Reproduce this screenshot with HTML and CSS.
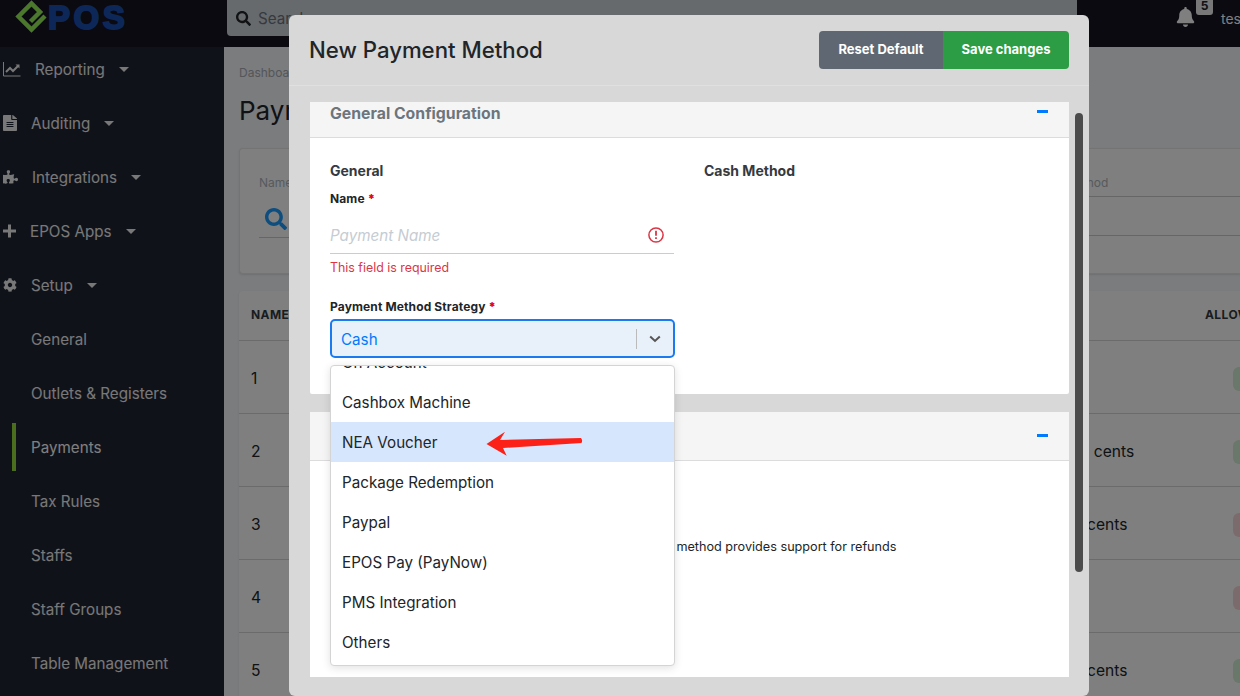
FILE: index.html
```html
<!DOCTYPE html>
<html lang="en">
<head>
<meta charset="utf-8">
<title>New Payment Method</title>
<link rel="stylesheet" href="styles.css">
</head>
<body>
<div class="page">
  <header class="topbar">
    <div class="logo">
      <svg class="logo-mark" viewBox="0 0 33 34"><path d="M30 16 16.500 29.500 3.500 16.500 16.500 3.500 25 12 15.500 21.500" fill="none" stroke="#96f05a" stroke-width="4.500"/></svg>
      <span class="logo-text">POS</span>
    </div>
    <div class="search">
      <svg class="search-icon" viewBox="0 0 512 512"><path d="M505 442.7L405.3 343c-4.5-4.5-10.6-7-17-7H372c27.6-35.3 44-79.7 44-128C416 93.1 322.9 0 208 0S0 93.1 0 208s93.1 208 208 208c48.3 0 92.7-16.4 128-44v16.3c0 6.4 2.5 12.5 7 17l99.7 99.7c9.4 9.4 24.6 9.4 33.9 0l28.3-28.3c9.4-9.4 9.4-24.6.1-34zM208 336c-70.7 0-128-57.2-128-128 0-70.7 57.2-128 128-128 70.7 0 128 57.2 128 128 0 70.7-57.2 128-128 128z"/></svg>
      <span>Search</span>
    </div>
    <div class="user">
      <div class="bell-wrap">
        <svg class="bell" viewBox="0 0 448 512"><path d="M224 512c35.32 0 63.97-28.65 63.97-64H160.03c0 35.35 28.65 64 63.97 64zm215.39-149.71c-19.32-20.76-55.47-51.99-55.47-154.29 0-77.7-54.48-139.9-127.94-155.16V32c0-17.67-14.32-32-31.98-32s-31.98 14.33-31.98 32v20.84C118.56 68.1 64.08 130.3 64.08 208c0 102.3-36.15 133.53-55.47 154.29-6 6.45-8.66 14.16-8.61 21.71.11 16.4 12.98 32 32.1 32h383.8c19.12 0 32-15.6 32.1-32 .05-7.55-2.61-15.27-8.61-21.71z"/></svg>
        <span class="badge">5</span>
      </div>
      <span class="username">test</span>
    </div>
  </header>

  <div class="shell">
    <nav class="sidebar">
      <ul class="nav">
        <li class="nav-item"><svg class="nav-icon w18" viewBox="0 0 18 16"><path d="M.5 1v14h17" fill="none" stroke-width="1"/><path d="M3 11 7 7l3 3 5-5" fill="none" stroke-width="2"/><path d="M12.5 3.500h4v4z" stroke="none"/></svg><span>Reporting</span><i class="caret"></i></li>
        <li class="nav-item"><svg class="nav-icon w14" viewBox="0 0 384 512" preserveAspectRatio="none"><path d="M224 136V0H24C10.7 0 0 10.7 0 24v464c0 13.3 10.7 24 24 24h336c13.3 0 24-10.7 24-24V160H248c-13.2 0-24-10.800-24-24zm64 236c0 6.600-5.400 12-12 12H108c-6.600 0-12-5.400-12-12v-8c0-6.600 5.400-12 12-12h168c6.600 0 12 5.400 12 12v8zm0-64c0 6.600-5.400 12-12 12H108c-6.600 0-12-5.400-12-12v-8c0-6.600 5.400-12 12-12h168c6.600 0 12 5.400 12 12v8zm0-72v8c0 6.600-5.400 12-12 12H108c-6.600 0-12-5.400-12-12v-8c0-6.600 5.400-12 12-12h168c6.600 0 12 5.400 12 12zm96-114.100v6.100H256V0h6.100c6.400 0 12.500 2.500 17 7l97.900 98c4.500 4.500 7 10.600 7 16.900z"/></svg><span>Auditing</span><i class="caret"></i></li>
        <li class="nav-item"><svg class="nav-icon w15" viewBox="0 0 576 512"><path d="M519.442 288.651c-41.519 0-59.5 31.593-82.058 31.593C377.409 320.244 432 144 432 144s-196.288 80-196.288-3.297c0-35.827 36.288-46.25 36.288-85.985C272 19.216 243.885 0 210.539 0c-34.654 0-66.366 18.891-66.366 56.346 0 41.364 31.711 59.277 31.711 81.75C175.885 207.719 0 166.758 0 166.758v333.237s178.635 41.047 178.635-28.662c0-22.473-40-40.107-40-81.471 0-37.456 29.25-56.346 63.577-56.346 33.673 0 61.788 19.216 61.788 54.717 0 39.735-36.288 50.158-36.288 85.985 0 60.803 129.675 25.73 181.23 25.73 0 0-34.725-120.101 25.827-120.101 35.962 0 46.423 36.152 86.308 36.152C556.712 416 576 387.99 576 354.443c0-34.199-18.962-65.792-56.558-65.792z"/></svg><span>Integrations</span><i class="caret"></i></li>
        <li class="nav-item"><svg class="nav-icon w13" viewBox="0 0 13 13"><path d="M5 0h3v5h5v3H8v5H5V8H0V5h5z"/></svg><span>EPOS Apps</span><i class="caret"></i></li>
        <li class="nav-item"><svg class="nav-icon w14" viewBox="0 0 512 512"><path d="M487.4 315.7l-42.6-24.6c4.3-23.2 4.3-47 0-70.2l42.6-24.6c4.9-2.8 7.1-8.6 5.5-14-11.1-35.6-30-67.8-54.7-94.6-3.8-4.1-10-5.1-14.8-2.3L380.8 110c-17.9-15.4-38.5-27.3-60.8-35.1V25.8c0-5.6-3.9-10.5-9.4-11.7-36.7-8.2-74.3-7.8-109.2 0-5.5 1.2-9.4 6.1-9.4 11.7V75c-22.2 7.9-42.8 19.8-60.8 35.1L88.7 85.5c-4.9-2.8-11-1.9-14.8 2.3-24.7 26.7-43.6 58.9-54.7 94.6-1.7 5.4.6 11.2 5.5 14L67.3 221c-4.3 23.2-4.3 47 0 70.2l-42.6 24.6c-4.9 2.8-7.1 8.6-5.5 14 11.1 35.6 30 67.8 54.7 94.6 3.8 4.1 10 5.1 14.8 2.3l42.6-24.6c17.9 15.4 38.5 27.3 60.8 35.1v49.2c0 5.6 3.9 10.5 9.4 11.7 36.7 8.2 74.3 7.8 109.2 0 5.5-1.2 9.4-6.1 9.4-11.7v-49.2c22.2-7.9 42.8-19.8 60.8-35.1l42.6 24.6c4.9 2.8 11 1.9 14.8-2.3 24.7-26.7 43.6-58.9 54.7-94.6 1.500-5.500-.7-11.300-5.600-14.100zM256 336c-44.100 0-80-35.900-80-80s35.900-80 80-80 80 35.900 80 80-35.900 80-80 80z"/></svg><span>Setup</span><i class="caret"></i></li>
        <li class="nav-item sub">General</li>
        <li class="nav-item sub">Outlets &amp; Registers</li>
        <li class="nav-item sub active">Payments</li>
        <li class="nav-item sub">Tax Rules</li>
        <li class="nav-item sub">Staffs</li>
        <li class="nav-item sub">Staff Groups</li>
        <li class="nav-item sub">Table Management</li>
      </ul>
    </nav>

    <main class="main">
      <div class="crumb">Dashboard</div>
      <h1 class="page-title">Payments</h1>
      <section class="filter">
        <div class="filter-col">
          <div class="filter-label">Name</div>
          <div class="filter-input">
            <svg class="filter-icon" viewBox="0 0 512 512"><path d="M505 442.7L405.3 343c-4.5-4.5-10.6-7-17-7H372c27.6-35.3 44-79.7 44-128C416 93.1 322.9 0 208 0S0 93.1 0 208s93.1 208 208 208c48.3 0 92.7-16.4 128-44v16.3c0 6.4 2.5 12.5 7 17l99.7 99.7c9.4 9.4 24.6 9.4 33.9 0l28.3-28.3c9.4-9.4 9.4-24.6.1-34zM208 336c-70.7 0-128-57.2-128-128 0-70.7 57.2-128 128-128 70.7 0 128 57.2 128 128 0 70.7-57.200 128-128 128z"/></svg>
          </div>
        </div>
        <div class="filter-col right">
          <div class="filter-label bordered">Payment Method</div>
          <div class="filter-input"></div>
        </div>
      </section>
      <section class="table">
        <div class="row head"><span>NAME</span><span></span><span>ALLOW</span></div>
        <div class="row"><span>1</span><span></span><span><i class="pill ok"></i></span></div>
        <div class="row"><span>2</span><span>Round to 10 cents</span><span><i class="pill ok"></i></span></div>
        <div class="row"><span>3</span><span>Round to 5 cents</span><span><i class="pill no"></i></span></div>
        <div class="row"><span>4</span><span></span><span><i class="pill no"></i></span></div>
        <div class="row"><span>5</span><span>Round to 5 cents</span><span><i class="pill ok"></i></span></div>
      </section>
    </main>
  </div>

  <div class="backdrop"></div>

  <div class="modal">
    <div class="modal-head">
      <h2 class="modal-title">New Payment Method</h2>
      <div class="btn-group">
        <button class="btn reset">Reset Default</button>
        <button class="btn save">Save changes</button>
      </div>
    </div>
    <div class="modal-body">
      <div class="cards">
        <section class="card first">
          <div class="card-head one"><span>General Configuration</span><i class="minus"></i></div>
          <div class="card-body columns">
            <div class="col">
              <h3 class="col-title">General</h3>
              <label class="label">Name <b>*</b></label>
              <div class="input">
                <span class="placeholder">Payment Name</span>
                <svg class="err-icon" viewBox="0 0 16 16"><circle cx="8" cy="8" r="7.100" fill="none" stroke="#dc3545" stroke-width="1.500"/><path d="M8 3.800v5M8 10.300v1.800" fill="none" stroke="#dc3545" stroke-width="1.800"/></svg>
              </div>
              <div class="error">This field is required</div>
              <label class="label second">Payment Method Strategy <b>*</b></label>
              <div class="select-wrap">
                <div class="select">
                  <span class="select-value">Cash</span>
                  <span class="select-sep"></span>
                  <svg class="chevron" viewBox="0 0 12 8"><path d="M1.200 1.500 6 6l4.800-4.500" fill="none" stroke="#555" stroke-width="2"/></svg>
                </div>
                <ul class="menu">
                  <li class="opt">On Account</li>
                  <li class="opt">Cashbox Machine</li>
                  <li class="opt hi">NEA Voucher</li>
                  <li class="opt">Package Redemption</li>
                  <li class="opt">Paypal</li>
                  <li class="opt">EPOS Pay (PayNow)</li>
                  <li class="opt">PMS Integration</li>
                  <li class="opt">Others</li>
                </ul>
              </div>
            </div>
            <div class="col">
              <h3 class="col-title">Cash Method</h3>
            </div>
          </div>
        </section>
        <section class="card">
          <div class="card-head two"><span></span><i class="minus"></i></div>
          <div class="card-body">
            <p class="note">This payment method provides support for refunds</p>
          </div>
        </section>
      </div>
      <div class="gutter"><div class="thumb"></div></div>
    </div>
  </div>

  <svg class="arrow" viewBox="0 0 98 28"><path d="M.5 14 19 1.700 14 10 95 8Q97 10.500 95.500 13L17 18 20.700 25.700z" fill="#fb2119"/></svg>
</div>
</body>
</html>
```

FILE: styles.css
```css
* { box-sizing: border-box; }
html, body { margin: 0; padding: 0; }
body { font-family: Inter, "Liberation Sans", sans-serif; color: #212529; }
ul { list-style: none; margin: 0; padding: 0; }
h1, h2, h3, p { margin: 0; }

.page { position: relative; width: 1240px; height: 696px; overflow: hidden; display: flex; flex-direction: column; background: #f6f8fb; }

/* top bar */
.topbar { flex: 0 0 47px; background: #141420; display: flex; align-items: flex-start; position: relative; z-index: 1; }
.logo { width: 227px; display: flex; align-items: flex-start; padding: 0 0 0 15px; }
.logo-mark { width: 33px; height: 34px; }
.logo-text { font-family: "Liberation Sans", sans-serif; font-weight: 700; font-size: 33px; line-height: 36px; letter-spacing: 3.5px; color: #1a50b0; -webkit-text-stroke: 2px #1a50b0; margin-left: 0; }
.search { width: 850px; height: 36px; background: #cfd4da; border-radius: 0 0 4px 4px; display: flex; align-items: center; gap: 7px; padding-left: 9px; font-size: 15.2px; color: #6c757d; }
.search-icon { width: 15px; height: 15px; fill: #212529; }
.user { margin-left: auto; display: flex; align-items: flex-start; overflow: hidden; width: 64px; }
.bell-wrap { position: relative; width: 45px; height: 30px; flex: none; }
.bell { position: absolute; left: 0; top: 7px; width: 19px; height: 20px; fill: #fff; }
.badge { position: absolute; left: 20px; top: -3px; width: 17px; height: 18px; border-radius: 3px; background: #f0f0f0; color: #212529; font-size: 12px; font-weight: 700; text-align: center; line-height: 18px; }
.username { font-size: 14px; color: #fff; line-height: 38px; }

/* shell */
.shell { flex: 1; display: flex; min-height: 0; }
.sidebar { flex: 0 0 224px; background: #202434; overflow: hidden; }
.nav { margin-top: -5px; }
.nav-item { height: 54px; display: flex; align-items: center; gap: 14px; padding-left: 3px; color: #f0f0f0; font-size: 15.2px; position: relative; }
.nav-icon { fill: #f0f0f0; stroke: #f0f0f0; stroke-width: 0; height: 16px; flex: none; }
.w18 { width: 18px; }
.w15 { width: 15px; }
.w14 { width: 14px; }
.w13 { width: 13px; }
.caret { width: 0; height: 0; border-left: 5px solid transparent; border-right: 5px solid transparent; border-top: 5.500px solid #f0f0f0; }
.sub { padding-left: 31px; }
.active { color: #fff; }
.active::before { content: ""; position: absolute; left: 12px; top: 3px; width: 4px; height: 48px; background: #94dc3c; }

/* main */
.main { flex: 1; min-width: 0; padding: 0 0 0 15px; overflow: hidden; }
.crumb { font-size: 12px; color: #a8adb3; line-height: 16px; margin-top: 18px; }
.page-title { font-size: 26px; font-weight: 400; line-height: 32px; margin-top: 14px; color: #212529; }
.filter { margin-top: 21px; height: 126px; background: #fff; border: 1px solid #e8e8e8; border-right: 0; border-radius: 4px 0 0 4px; display: flex; justify-content: space-between; box-shadow: 0 1px 2px rgba(0,0,0,.1); }
.filter-col { width: 70px; margin-left: 19px; padding-top: 26px; }
.filter-col.right { width: 152px; margin-left: 0; }
.filter-label { font-size: 12px; line-height: 16px; color: #adb5bd; }
.filter-label.bordered { height: 22px; border-bottom: 1px solid #ccc; white-space: nowrap; text-indent: -76px; }
.filter-input { height: 39px; border-bottom: 1px solid #ccc; }
.filter-col:first-child .filter-input { height: 38px; margin-top: 9px; padding: 8px 0 0 6px; }
.filter-icon { display: block; width: 22px; height: 22px; fill: #1a9cff; }
.table { margin-top: 17px; background: #fff; border-radius: 4px 0 0 0; box-shadow: 0 1px 2px rgba(0,0,0,.1); }
.row { display: grid; grid-template-columns: 752px 202px 60px; height: 73px; align-items: center; padding: 3px 0 0 12px; border-bottom: 1px solid #d6d6d6; font-size: 15.6px; white-space: nowrap; }
.row.head { height: 50px; padding: 0 0 2px 12px; font-size: 12px; font-weight: 700; letter-spacing: .4px; color: #343a40; }
.pill { display: inline-block; vertical-align: middle; width: 50px; height: 24px; margin-left: 28px; border-radius: 6px; }
.pill.ok { background: #d5f0d8; }
.pill.no { background: #f8d7da; }

/* overlay */
.backdrop { position: absolute; inset: 0; background: rgba(0,0,0,.5); z-index: 2; }
.modal { position: absolute; left: 289px; top: 15px; width: 800px; height: 681px; background: #d8d8d8; border-radius: 6px; z-index: 3; display: flex; flex-direction: column; }
.modal-head { flex: 0 0 71px; border-bottom: 1px solid #e0e0e0; display: flex; align-items: center; justify-content: space-between; padding: 0 20px; }
.modal-title { font-size: 22.2px; font-weight: 500; color: #212529; padding-bottom: 2px; }
.btn-group { display: flex; }
.btn { height: 38px; border: 0; padding: 0 0 2px; font-family: inherit; font-size: 13px; font-weight: 700; color: #fff; }
.reset { width: 124px; background: #5f6872; border-radius: 4px 0 0 4px; }
.save { width: 126px; background: #2c9c45; border-radius: 0 4px 4px 0; }
.modal-body { flex: 1; min-height: 0; display: flex; padding: 16px 0 19px 21px; }
.cards { width: 759px; overflow: hidden; display: flex; flex-direction: column; gap: 18px; }
.gutter { flex: none; width: 20px; padding: 11px 6px 0; }
.thumb { width: 8px; height: 459px; border-radius: 4px; background: #4c4c4c; }

.card { background: #fff; flex: none; border-radius: 2px; }
.card-head { background: #f5f5f5; border-bottom: 1px solid #dcdcdc; display: flex; justify-content: space-between; padding: 0 21px 0 20px; }
.card-head.one { height: 36px; font-size: 15.8px; font-weight: 700; color: #6c757d; line-height: 23px; }
.card-head.two { height: 49px; }
.minus { width: 11px; height: 3px; background: #007bff; margin-top: 8px; }
.two .minus { margin-top: 22px; }
.card-body { padding: 0 20px; }
.columns { display: grid; grid-template-columns: 344px 1fr; column-gap: 30px; height: 256px; }
.col-title { font-size: 14px; font-weight: 700; color: #343a40; line-height: 20px; margin-top: 23px; }
.label { display: block; font-size: 12px; font-weight: 700; line-height: 16px; letter-spacing: .13px; color: #212529; margin-top: 10px; }
.label b { color: #e3001b; }
.label.second { margin-top: 23px; }
.input { height: 37px; margin-top: 10px; border-bottom: 1px solid #ccc; display: flex; align-items: center; justify-content: space-between; padding: 0 10px 0 0; }
.placeholder { font-size: 15.2px; font-style: italic; color: #c5ccd3; }
.err-icon { width: 16px; height: 16px; }
.error { font-size: 12.4px; color: #dc3545; line-height: 16px; margin-top: 6px; }
.select-wrap { position: relative; margin-top: 4px; }
.select { height: 39px; border: 2px solid #1a7af0; border-radius: 5px; background: #e8f0fa; display: flex; align-items: center; padding: 1px 0 0 9px; width: 345px; }
.select-value { flex: 1; font-size: 15.2px; color: #007bff; }
.select-sep { width: 1px; height: 20px; background: #bbb; }
.chevron { width: 12px; height: 8px; margin: 0 12px 0 12px; }
.menu { position: absolute; z-index: 2; left: 0; top: 46px; width: 345px; height: 301px; overflow: hidden; background: #fff; border: 1px solid #d4d4d4; border-radius: 4px; box-shadow: 0 2px 8px rgba(0,0,0,.12); }
.opt { height: 40px; display: flex; align-items: center; padding-left: 11px; font-size: 15.2px; color: #212529; }
.opt:first-child { margin-top: -24px; }
.opt.hi { background: #d6e6fc; }
.note { font-size: 12.65px; line-height: 16px; color: #212529; padding: 78px 0 132px 262px; }

.arrow { position: absolute; z-index: 4; left: 486px; top: 430px; width: 98px; height: 28px; }
```
